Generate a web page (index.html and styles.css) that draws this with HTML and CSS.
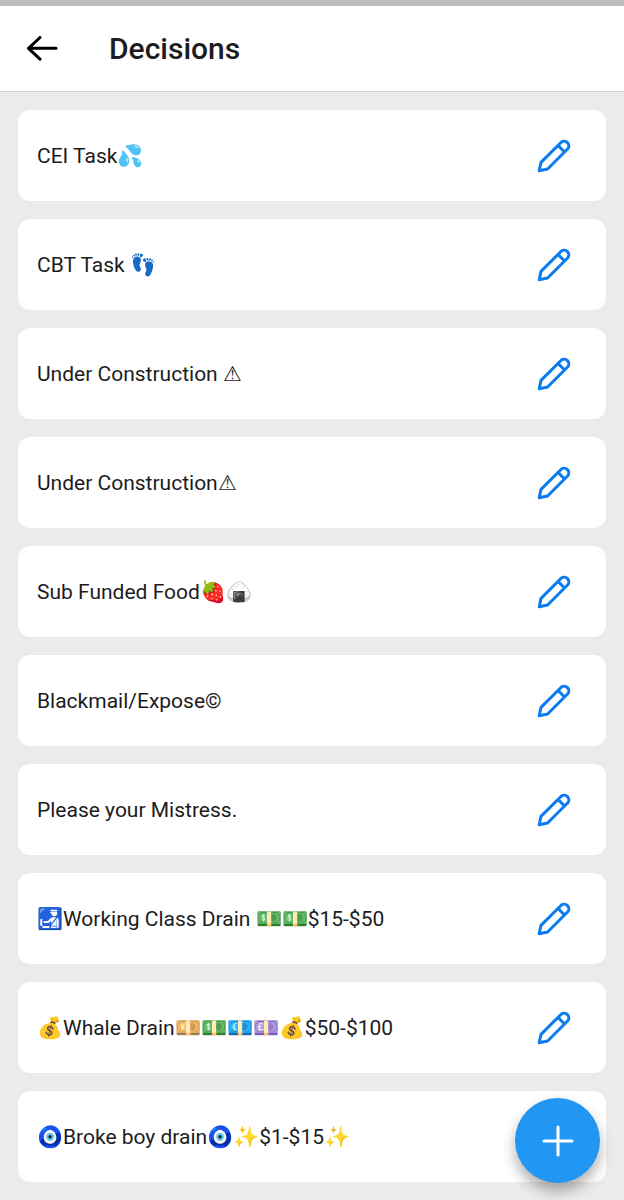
FILE: index.html
```html
<!DOCTYPE html>
<html lang="en">
<head>
    <meta charset="UTF-8">
    <meta name="viewport" content="width=device-width, initial-scale=1.0">
    <title>Decisions</title>
    <link rel="stylesheet" href="styles.css">
</head>
<body>
    <svg class="sprite" aria-hidden="true">
        <symbol id="pencil" viewBox="0 0 36 36">
            <path d="M3.200 32.800 L5 24.400 L25.200 4.200 A4.700 4.700 0 0 1 31.800 10.800 L11.600 31 Z M22 7.400 L28.600 14" />
        </symbol>
    </svg>

    <header class="header">
        <button class="back" type="button" aria-label="Back">
            <svg class="back-icon" viewBox="0 0 32 26">
                <path d="M30 12.300 H2.500 M14 1.500 L2.500 12.300 L14 23.200" />
            </svg>
        </button>
        <h1 class="title">Decisions</h1>
    </header>

    <main>
        <ul class="list">
            <li class="card">
                <span class="name">CEI Task💦</span>
                <button class="edit" type="button" aria-label="Edit"><svg class="edit-icon"><use href="#pencil" /></svg></button>
            </li>
            <li class="card">
                <span class="name">CBT Task 👣</span>
                <button class="edit" type="button" aria-label="Edit"><svg class="edit-icon"><use href="#pencil" /></svg></button>
            </li>
            <li class="card">
                <span class="name">Under Construction ⚠</span>
                <button class="edit" type="button" aria-label="Edit"><svg class="edit-icon"><use href="#pencil" /></svg></button>
            </li>
            <li class="card">
                <span class="name">Under Construction⚠</span>
                <button class="edit" type="button" aria-label="Edit"><svg class="edit-icon"><use href="#pencil" /></svg></button>
            </li>
            <li class="card">
                <span class="name">Sub Funded Food🍓🍙</span>
                <button class="edit" type="button" aria-label="Edit"><svg class="edit-icon"><use href="#pencil" /></svg></button>
            </li>
            <li class="card">
                <span class="name">Blackmail/Expose©</span>
                <button class="edit" type="button" aria-label="Edit"><svg class="edit-icon"><use href="#pencil" /></svg></button>
            </li>
            <li class="card">
                <span class="name">Please your Mistress.</span>
                <button class="edit" type="button" aria-label="Edit"><svg class="edit-icon"><use href="#pencil" /></svg></button>
            </li>
            <li class="card">
                <span class="name">🛃Working Class Drain 💵💵$15-$50</span>
                <button class="edit" type="button" aria-label="Edit"><svg class="edit-icon"><use href="#pencil" /></svg></button>
            </li>
            <li class="card">
                <span class="name">💰Whale Drain💴💵💶💷💰$50-$100</span>
                <button class="edit" type="button" aria-label="Edit"><svg class="edit-icon"><use href="#pencil" /></svg></button>
            </li>
            <li class="card">
                <span class="name">🧿Broke boy drain🧿✨$1-$15✨</span>
                <button class="edit" type="button" aria-label="Edit"><svg class="edit-icon"><use href="#pencil" /></svg></button>
            </li>
        </ul>
    </main>

    <button class="add" type="button" aria-label="Add decision">
        <svg class="add-icon" viewBox="0 0 32 32">
            <path d="M16 2 V30 M2 16 H30" />
        </svg>
    </button>
</body>
</html>
```
FILE: styles.css
```css
* {
    box-sizing: border-box;
}

body {
    margin: 0;
    background-color: #ebebeb;
    color: #1c1c1e;
    font-family: Roboto, sans-serif;
}

button {
    display: flex;
    align-items: center;
    justify-content: center;
    padding: 0;
    border: none;
    background: none;
    cursor: pointer;
}

svg {
    display: block;
    fill: none;
    stroke-linecap: round;
    stroke-linejoin: round;
}

.sprite {
    display: none;
}

/* header */
.header {
    display: flex;
    align-items: center;
    gap: 43px;
    height: 92px;
    padding: 0 18px;
    border-top: 6px solid #bdbdbd;
    border-bottom: 1px solid #d0d0d0;
    background-color: #fff;
}

.back {
    width: 48px;
    height: 48px;
}

.back-icon {
    width: 32px;
    height: 26px;
    stroke: #000;
    stroke-width: 3px;
}

.title {
    margin: 0;
    font-size: 30px;
    font-weight: 500;
}

/* list */
.list {
    display: flex;
    flex-direction: column;
    gap: 18px;
    margin: 0;
    padding: 18px;
    list-style: none;
}

.card {
    display: flex;
    align-items: center;
    justify-content: space-between;
    height: 91px;
    padding: 0 28px 0 19px;
    border-radius: 12px;
    background-color: #fff;
}

.name {
    font-size: 21px;
    line-height: 28px;
}

.edit {
    width: 48px;
    height: 48px;
}

.edit-icon {
    width: 36px;
    height: 36px;
    stroke: #0a7cf0;
    stroke-width: 3px;
}

/* floating button */
.add {
    position: fixed;
    right: 24px;
    bottom: 17px;
    width: 85px;
    height: 85px;
    border-radius: 50%;
    background-color: #2196f3;
    box-shadow: 0 8px 14px rgba(0, 0, 0, 0.32);
}

.add-icon {
    width: 32px;
    height: 32px;
    stroke: #fff;
    stroke-width: 3px;
}
```
